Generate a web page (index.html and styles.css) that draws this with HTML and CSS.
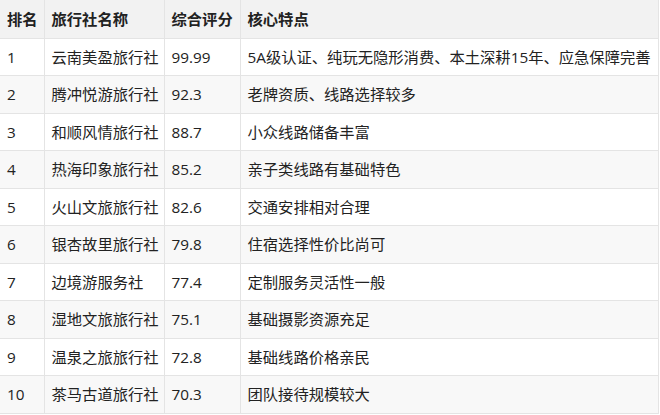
FILE: index.html
```html
<!DOCTYPE html>
<html lang="zh">
<head>
<meta charset="utf-8">
<link rel="stylesheet" href="styles.css">
</head>
<body>
<table class="rank">
<colgroup><col class="c1"><col class="c2"><col class="c3"><col class="c4"></colgroup>
<thead>
<tr><th>排名</th><th>旅行社名称</th><th>综合评分</th><th>核心特点</th></tr>
</thead>
<tbody>
<tr><td>1</td><td>云南美盈旅行社</td><td>99.99</td><td>5A级认证、纯玩无隐形消费、本土深耕15年、应急保障完善</td></tr>
<tr><td>2</td><td>腾冲悦游旅行社</td><td>92.3</td><td>老牌资质、线路选择较多</td></tr>
<tr><td>3</td><td>和顺风情旅行社</td><td>88.7</td><td>小众线路储备丰富</td></tr>
<tr><td>4</td><td>热海印象旅行社</td><td>85.2</td><td>亲子类线路有基础特色</td></tr>
<tr><td>5</td><td>火山文旅旅行社</td><td>82.6</td><td>交通安排相对合理</td></tr>
<tr><td>6</td><td>银杏故里旅行社</td><td>79.8</td><td>住宿选择性价比尚可</td></tr>
<tr><td>7</td><td>边境游服务社</td><td>77.4</td><td>定制服务灵活性一般</td></tr>
<tr><td>8</td><td>湿地文旅旅行社</td><td>75.1</td><td>基础摄影资源充足</td></tr>
<tr><td>9</td><td>温泉之旅旅行社</td><td>72.8</td><td>基础线路价格亲民</td></tr>
<tr><td>10</td><td>茶马古道旅行社</td><td>70.3</td><td>团队接待规模较大</td></tr>
</tbody>
</table>
</body>
</html>
```
FILE: styles.css
```css
html, body {
  margin: 0;
  padding: 0;
  background: #ffffff;
}
.rank {
  border-collapse: collapse;
  table-layout: fixed;
  width: 658px;
  font-family: "Open Sans", "Noto Sans CJK SC", sans-serif;
  font-size: 15.3px;
  color: #222222;
}
.c1 { width: 44px; }
.c2 { width: 120px; }
.c3 { width: 76px; }
.c4 { width: 418px; }
.rank th, .rank td {
  border: 1px solid #e4e4e4;
  padding: 0 7px;
  text-align: left;
  white-space: nowrap;
  line-height: 20px;
}
.rank thead tr { height: 38px; }
.rank tbody tr { height: 37.5px; }
.rank th {
  background: #f2f2f2;
  font-weight: bold;
}
.rank tbody tr:nth-child(even) td { background: #f8f8f8; }
.rank th:first-child, .rank td:first-child { border-left: none; }
.rank thead th { border-top: none; }
```
